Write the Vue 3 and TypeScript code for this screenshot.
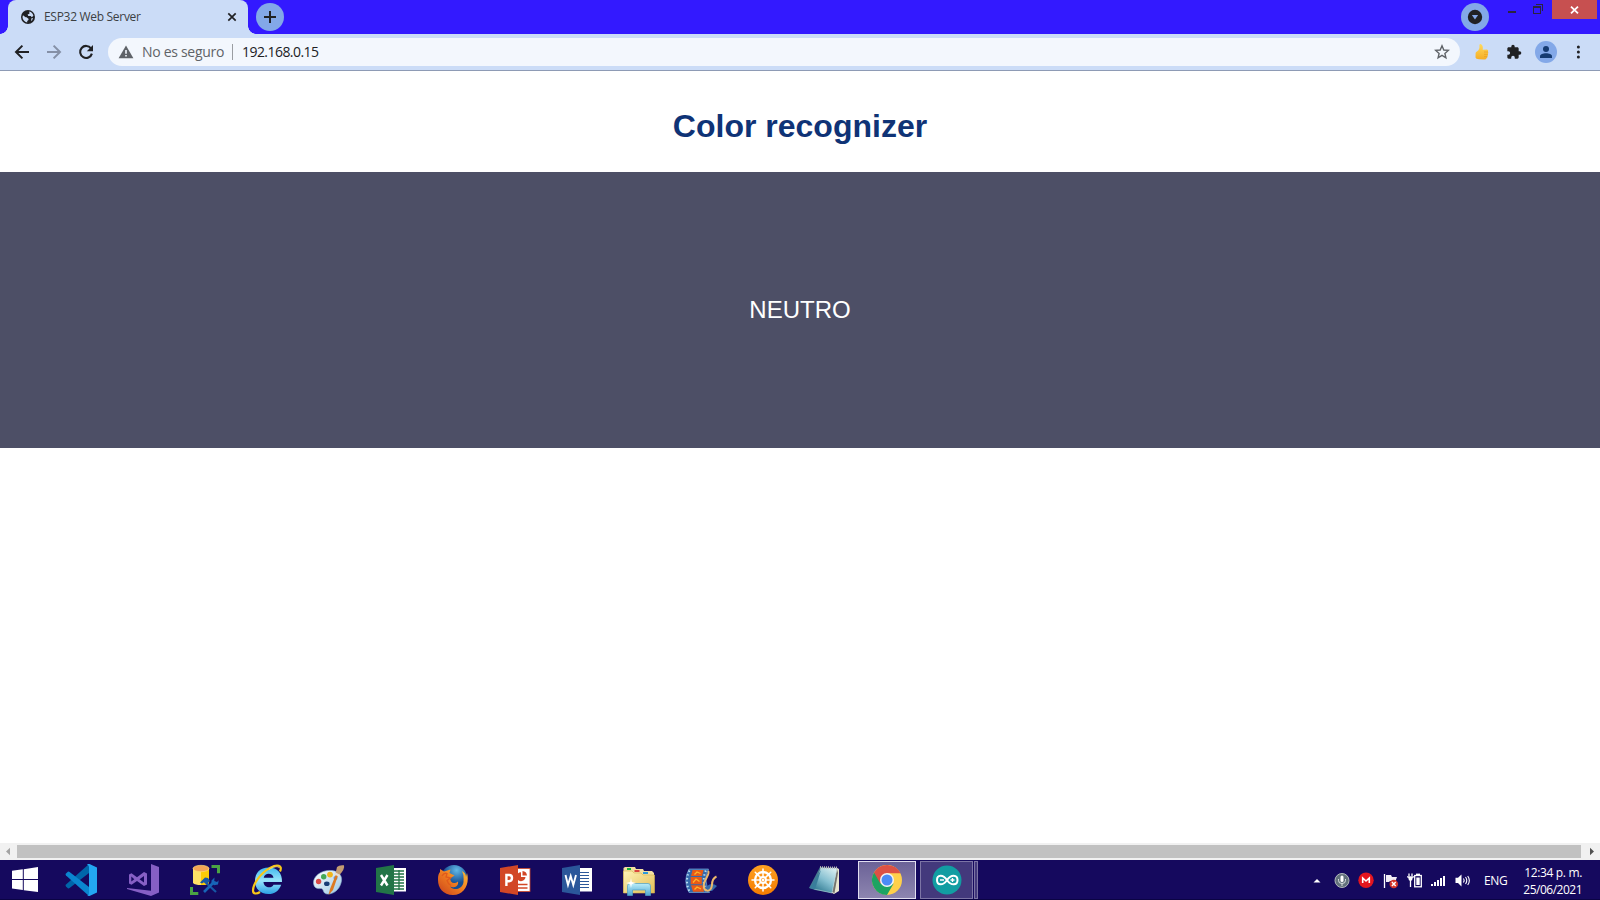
<script setup lang="ts">
import { ref } from 'vue'

const tabTitle = ref('ESP32 Web Server')
const address = ref('192.168.0.15')
const reading = ref('NEUTRO')
const teeth = Array.from({ length: 8 }, (_, i) => i * 45)
const bars = [1, 2, 3, 4, 5]
</script>

<template>
  <div class="screen">
    <header class="titlebar">
      <div class="tab">
        <svg class="globe" width="16" height="16" viewBox="0 0 16 16">
          <circle cx="8" cy="8" r="7" fill="#202124" />
          <path d="M3 6.2 L5.6 8.2 L6.6 8.2 L8.7 10 L8.2 11.2 L7.2 12 V13.4 C4.5 13 2.6 10.8 2.5 8 Z" fill="#cbdcf7" />
          <path d="M9.3 2.6 C11.4 3.1 13 4.7 13.4 6.8 L11.8 8.2 L10.7 7 H8.3 L7.6 5.6 L9.4 4.7 Z" fill="#cbdcf7" />
          <path d="M11.5 9.3 L13 9 L12 11.4 L11 11.8 Z" fill="#cbdcf7" />
        </svg>
        <span class="tab-title">{{ tabTitle }}</span>
        <svg class="tab-close" width="10" height="10" viewBox="0 0 10 10">
          <path d="M1.3 1.3 L8.7 8.7 M8.7 1.3 L1.3 8.7" stroke="#202124" stroke-width="1.7" />
        </svg>
      </div>
      <div class="round new-tab">
        <svg width="14" height="14" viewBox="0 0 14 14"><path d="M7 1 V13 M1 7 H13" stroke="#202124" stroke-width="2" /></svg>
      </div>
      <div class="spacer"></div>
      <div class="round search-tabs">
        <svg width="16" height="16" viewBox="0 0 16 16">
          <circle cx="8" cy="8" r="7.2" fill="#202124" />
          <path d="M4.9 6 H11.1 L8 10.6 Z" fill="#83a8e8" />
        </svg>
      </div>
      <svg class="minimize" width="10" height="14" viewBox="0 0 10 14"><rect x="1" y="11" width="8" height="2" fill="#2b2440" /></svg>
      <svg class="restore" width="11" height="14" viewBox="0 0 11 14" shape-rendering="crispEdges">
        <path d="M3 4.5 H9.5 V11 M.5 7 V13.5 H7.5 V7" fill="none" stroke="#2b2440" />
        <rect x="0" y="6" width="8" height="2" fill="#2b2440" />
      </svg>
      <div class="close">
        <svg width="9" height="8" viewBox="0 0 9 8"><path d="M1 .7 L8 7.3 M8 .7 L1 7.3" stroke="#fff" stroke-width="1.8" /></svg>
      </div>
    </header>

    <nav class="toolbar">
      <svg class="nav-icon" width="16" height="16" viewBox="0 0 16 16"><path d="M15 8 H2 M8.4 1.6 L2 8 L8.4 14.4" fill="none" stroke="#202124" stroke-width="2" /></svg>
      <svg class="nav-icon" width="16" height="16" viewBox="0 0 16 16"><path d="M1 8 H14 M7.6 1.6 L14 8 L7.6 14.4" fill="none" stroke="#8590a6" stroke-width="2" /></svg>
      <svg class="nav-icon" width="16" height="16" viewBox="0 0 16 16">
        <path d="M13 4.4 A6 6 0 1 0 13.9 9.6" fill="none" stroke="#202124" stroke-width="2.1" />
        <path d="M15 1 V7.2 H8.8 Z" fill="#202124" />
      </svg>
      <div class="omnibox">
        <svg class="warning" width="16" height="14" viewBox="0 0 16 14">
          <path d="M8 .6 L15.4 13.2 H.6 Z" fill="#5f6368" />
          <path d="M8 5 V8.8 M8 10 V11.6" stroke="#f3f7fd" stroke-width="1.6" />
        </svg>
        <span class="insecure">No es seguro</span>
        <span class="divider"></span>
        <span class="address">{{ address }}</span>
        <span class="spacer"></span>
        <svg class="star" width="16" height="16" viewBox="0 0 16 16">
          <path d="M8 1.8 L9.8 6 L14.3 6.4 L10.9 9.4 L11.9 13.8 L8 11.4 L4.1 13.8 L5.1 9.4 L1.7 6.4 L6.2 6 Z" fill="none" stroke="#5f6368" stroke-width="1.4" />
        </svg>
      </div>
      <svg class="thumb" width="16" height="18" viewBox="0 0 16 18">
        <defs><linearGradient id="thumbFill" x1="0" y1="0" x2="0" y2="1"><stop offset="0" stop-color="#ffda5c" /><stop offset="1" stop-color="#f5ad25" /></linearGradient></defs>
        <path d="M1.6 10.2 Q1.6 8.800 2.900 8.400 Q6 6.500 5.400 2.400 Q5.600 .7 7 1.200 Q9.400 2.400 8.700 6.800 L13 6.600 Q14.800 7 14 8.600 Q14.800 9.800 13.900 10.900 Q14.500 12.200 13.400 13 Q13.800 14.600 12.700 15 Q12.200 16.600 10.200 16.500 L5 16.300 Q1.700 16 1.500 14.500 Z" fill="url(#thumbFill)" />
        <path d="M10 9 H14 M10 11.4 H13.7 M10 13.6 H13.3" stroke="#e89f20" stroke-width=".7" />
      </svg>
      <svg class="puzzle" width="16" height="16" viewBox="0 0 24 24">
        <path d="M20.5 11H19V7c0-1.1-.9-2-2-2h-4V3.500a2.500 2.500 0 0 0-5 0V5H4c-1.100 0-2 .9-2 2v3.800h1.500a2.700 2.700 0 0 1 0 5.400H2V20c0 1.100.9 2 2 2h3.800v-1.500a2.700 2.700 0 0 1 5.400 0V22H17c1.100 0 2-.9 2-2v-4h1.500a2.500 2.500 0 0 0 0-5z" fill="#202124" />
      </svg>
      <svg class="avatar" width="22" height="22" viewBox="0 0 22 22">
        <circle cx="11" cy="11" r="11" fill="#83a8e8" />
        <circle cx="11" cy="8" r="3" fill="#153a70" />
        <path d="M5 17 V15.4 C5 13.200 8 12.300 11 12.300 S17 13.200 17 15.400 V17 Z" fill="#153a70" />
      </svg>
      <svg class="menu" width="4" height="16" viewBox="0 0 4 16" fill="#202124"><circle cx="2.400" cy="3" r="1.500" /><circle cx="2.400" cy="8" r="1.500" /><circle cx="2.400" cy="13" r="1.500" /></svg>
    </nav>

    <main class="page">
      <h1>Color recognizer</h1>
      <section class="reading">{{ reading }}</section>
    </main>

    <div class="scrollbar">
      <svg width="17" height="17" viewBox="0 0 17 17"><path d="M6 8.500 L10 4.700 V12.300 Z" fill="#a3a3a3" /></svg>
      <div class="scroll-thumb"></div>
      <svg class="scroll-right" width="17" height="17" viewBox="0 0 17 17"><path d="M13 8.500 L9 4.700 V12.300 Z" fill="#505050" /></svg>
    </div>

    <footer class="taskbar">
      <div class="start">
        <svg width="32" height="32" viewBox="0 0 32 32" fill="#fff"><path d="M3 6.800 L13.800 5.300 V15 H3 Z M14.800 5.200 L29 3 V15 H14.800 Z M3 16 H13.800 V26 L3 24.400 Z M14.800 16 H29 V28 L14.800 26.200 Z" /></svg>
      </div>

      <div class="app">
        <svg width="32" height="32" viewBox="0 0 32 32">
          <path d="M24 0 L1 20.500 Q0 21.400 1 22.500 L2.800 24.200 Q3.600 24.700 4.600 24 L24 9 Z" fill="#0065a9" />
          <path d="M24 32 L1 11.500 Q0 10.600 1 9.500 L2.800 7.800 Q3.600 7.300 4.600 8 L24 23 Z" fill="#0a86d0" />
          <path d="M23 0 L24.500 0 L32 3.500 V28.500 L24.500 32 L22 31.500 Q24 31.500 24 29 V3 Q24 1 22 .7 Z" fill="#23a7f2" />
        </svg>
      </div>

      <div class="app">
        <svg width="32" height="32" viewBox="0 0 32 32">
          <path d="M24 0 L32 3 V28.500 L24 32 L0 25 V24 L24 26.700 Z" fill="#865fc5" />
          <path d="M2 10.500 L4.500 9.300 L10 13.300 L17 8 L20 9.500 V20.500 L17 22 L10 17 L4.500 20.800 L2 19.500 Z M4.300 12.500 V17.600 L7.300 15.200 Z M17 12 L12.500 15.200 L17 18.500 Z" fill="#865fc5" fill-rule="evenodd" />
        </svg>
      </div>

      <div class="app">
        <svg width="32" height="32" viewBox="0 0 32 32">
          <path d="M4 4 H20 V19 Q18 21 12 21 T4 19 Z" fill="#ffe066" />
          <path d="M12 6 H20 V19 Q18 21 12 21 Z" fill="#fccb07" />
          <ellipse cx="12" cy="4.500" rx="8" ry="3.200" fill="#f2a456" stroke="#ffe477" stroke-width=".6" />
          <path d="M22.500 1 H31 V9.300 H28 V4 H22.500 Z M1 23 H4 V28 H9.300 V31 H1 Z" fill="#4ba344" />
          <path d="M14 16 L27 28" stroke="#1657a5" stroke-width="2.200" />
          <path d="M11 18.500 L16 13.500 L19 14 L21 17 L18.500 19.500 L16 17.500 L13 19.500 Z" fill="#1657a5" />
          <path d="M15 28 L25 18" stroke="#1764b7" stroke-width="2.600" />
          <path d="M22.500 16.500 L25.500 13.600 L25.300 17 L28 18 L29.700 16.200 L29 20.500 L25 21.300 L22.500 19 Z" fill="#1764b7" />
        </svg>
      </div>

      <div class="app">
        <svg width="32" height="32" viewBox="0 0 32 32">
          <defs><linearGradient id="ieBlue" x1="0" y1="0" x2="0" y2="1"><stop offset="0" stop-color="#41b8ee" /><stop offset=".5" stop-color="#99e5fb" /><stop offset="1" stop-color="#2ca2e5" /></linearGradient></defs>
          <path d="M31 18 H12.500 C12.800 24 20.500 25 22.500 20.700 H30.200 C28 27 23.500 30 17.500 30 C9 30 4 24.500 4 17 C4 8.500 9.500 3.500 17.500 3.500 C26.500 3.500 31.300 9 31 18 Z M12.700 13.800 H22.500 C22 8.500 13.600 8.200 12.700 13.800 Z" fill="url(#ieBlue)" fill-rule="evenodd" />
          <path d="M29 7.500 C32 1 26 0 19.500 3.600 C9.500 9 2 20 2 26.500 C2 30.500 6 30 9 28" fill="none" stroke="#f7c719" stroke-width="2.200" />
          <path d="M28.500 4 C27 1.500 22 3 18 5.500" fill="none" stroke="#ffeb82" stroke-width=".8" />
        </svg>
      </div>

      <div class="app">
        <svg width="32" height="32" viewBox="0 0 32 32">
          <defs><linearGradient id="palette" x1="0" y1="0" x2="1" y2="1"><stop offset="0" stop-color="#fff" /><stop offset="1" stop-color="#9bc8e5" /></linearGradient></defs>
          <path d="M.5 19 C0 12 9 5.500 19 6.500 C27 7.500 30 13 28 19 C26.500 25 21 30.500 14 30 C9.500 29.500 11 24.500 8 24.500 C4 25 1 24 .5 19 Z" fill="url(#palette)" stroke="#8ab4cf" stroke-width=".6" />
          <circle cx="5.600" cy="17.500" r="2.700" fill="#da4b47" /><circle cx="10.700" cy="12.700" r="2.700" fill="#43a957" /><circle cx="17" cy="10.600" r="2.900" fill="#f0b51d" /><circle cx="22.500" cy="14" r="2" fill="#6c92d5" />
          <ellipse cx="13.800" cy="19.700" rx="2.800" ry="2.300" fill="#163c75" />
          <path d="M25.500 10 L23.500 9 L17 25 L15.500 31 L20 26 Z" fill="#dc7a20" />
          <path d="M22.500 9.500 L24 3 Q26 .8 31 1.300 Q32 5 26.500 11 Z" fill="#c39c72" />
          <path d="M22.600 8.600 L27 10.700 L26 12.800 L21.800 10.800 Z" fill="#e9ddd0" />
        </svg>
      </div>

      <div class="app">
        <svg width="32" height="32" viewBox="0 0 32 32">
          <rect x="18" y="4" width="13" height="23.500" fill="#fff" />
          <path d="M19 7 H29 M19 10 H29 M19 13 H29 M19 16 H29 M19 19 H29 M19 22 H29 M19 25 H29 M24 6 V26" stroke="#227447" stroke-width="1.300" />
          <path d="M1 4 L19 1 V31 L1 28 Z" fill="#227447" />
          <path d="M6 11 L12.500 21.500 M12.500 11 L6 21.500" stroke="#fff" stroke-width="2.400" />
        </svg>
      </div>

      <div class="app">
        <svg width="32" height="32" viewBox="0 0 32 32">
          <defs><radialGradient id="foxGlobe" cx=".6" cy=".2"><stop offset="0" stop-color="#62b9e7" /><stop offset="1" stop-color="#164d92" /></radialGradient><linearGradient id="fox" x1="1" y1="0" x2="0" y2="1"><stop offset="0" stop-color="#ffc43a" /><stop offset=".45" stop-color="#f28120" /><stop offset="1" stop-color="#c83f1d" /></linearGradient></defs>
          <circle cx="17" cy="14" r="13" fill="url(#foxGlobe)" />
          <path d="M3 5 L7 7.500 L13.500 5.500 L12.500 9 L17.500 11.500 L13 14.500 L14 17.500 Q17 20.500 21 17.500 C22 23 16 24 13 22.500 C18 28 27 24 26.500 17 Q27 11 25 7 Q29 9 29 13 L30 9 C33 20 27 31 16 31 C6 31 1 24 1 16 Q.8 10 3 8 Z" fill="url(#fox)" />
          <path d="M5 12 Q7 8.500 10 9.500 L9 13 L13.500 14 L10 16.500 Q11 20 14 21.500" fill="none" stroke="#e05a1d" stroke-width="1.300" />
        </svg>
      </div>

      <div class="app">
        <svg width="32" height="32" viewBox="0 0 32 32">
          <rect x="18" y="4.500" width="13" height="23" fill="#fff" stroke="#d24726" stroke-width=".8" />
          <path d="M22 8.200 A4.500 4.500 0 1 0 26.500 13 H22 Z" fill="#d24726" /><path d="M23.500 7 A5 5 0 0 1 28 11.500 H23.500 Z" fill="#d24726" />
          <path d="M19 20.500 H28.500 M19 24 H28.500" stroke="#d24726" stroke-width="1.500" />
          <path d="M1 4 L19 1 V31 L1 28 Z" fill="#d24726" />
          <path d="M7.400 22 V11 H10.200 Q13 11 13 14 T10 17.200 H7.400" fill="none" stroke="#fff" stroke-width="2.400" />
        </svg>
      </div>

      <div class="app">
        <svg width="32" height="32" viewBox="0 0 32 32">
          <rect x="18" y="4" width="13" height="23.500" fill="#fff" />
          <path d="M19 8.500 H28 M19 11.500 H28 M19 14.500 H28 M19 17.500 H28 M19 20.500 H28 M19 23.500 H28" stroke="#2b579a" stroke-width="1" />
          <path d="M1 4 L19 1 V31 L1 28 Z" fill="#2b579a" />
          <path d="M4.500 11 L7 21 L9.700 12 L12.300 21 L15 11" fill="none" stroke="#fff" stroke-width="1.900" />
        </svg>
      </div>

      <div class="app">
        <svg width="32" height="32" viewBox="0 0 32 32">
          <defs><linearGradient id="folder" x1="0" y1="0" x2="1" y2="1"><stop offset="0" stop-color="#fff3b7" /><stop offset="1" stop-color="#e1bd55" /></linearGradient><linearGradient id="stand" x1="0" y1="0" x2="0" y2="1"><stop offset="0" stop-color="#b9edfa" /><stop offset="1" stop-color="#4fa6d0" /></linearGradient></defs>
          <path d="M.5 29 V4 L2 3 H12 L13 5 H20 L21 7 H29 L31 9 V29 Z" fill="#f3dfa0" />
          <rect x="4" y="4" width="4" height="2" fill="#17b13b" /><rect x="11.500" y="6" width="5" height="2" fill="#db443d" /><rect x="20" y="8" width="5" height="2" fill="#2c9bdc" />
          <path d="M.5 7 H9 L11 9 H18 L20 11 H31.500 V29 H.5 Z" fill="url(#folder)" stroke="#d8b64e" stroke-width=".6" />
          <path d="M4.500 31.500 V22 Q4.500 19.500 7 19.500 H25 Q27.500 19.500 27.500 22 V31.500 H22.500 V26 H9.500 V31.500 Z" fill="url(#stand)" stroke="#4b9ec5" stroke-width=".7" />
          <path d="M8 14 L8.800 18 L13 19 L8.800 20.200 L8 24 L7.200 20.200 L3 19 L7.200 18 Z" fill="#fff" />
        </svg>
      </div>

      <div class="app">
        <svg width="32" height="32" viewBox="0 0 32 32">
          <path d="M4 5 H23.500 Q18 16 24.500 28.500 H4 Q-2.500 17 4 5 Z" fill="#356aac" stroke="#75a9d8" stroke-width=".7" />
          <path d="M4.500 6.500 Q-.5 17 4.500 27.500 M20.800 6.500 Q16.500 17 21.300 27.500" fill="none" stroke="#b9def2" stroke-width="2" stroke-dasharray="1.500 2.400" />
          <path d="M7.500 6 H18.500 L17 12 H6 Z M5.700 13 H16.800 V20.300 H5.700 Z M6 21.300 H17.300 L19 27.800 H8 Z" fill="#e95a17" />
          <path d="M9.500 10.500 L12 8 L15.500 9.500 M8 18.500 L11 15 L14.500 17.500 M9.500 25.500 L12 23 L16 25" fill="none" stroke="#ffb52a" stroke-width="1.300" />
          <path d="M22 22 Q27 18 32 22 L27 27 L22 27 Z" fill="#356aac" />
          <path d="M23 7 C26 9 19 16 18.800 21 C18 28 26 29 27 21 Q27 14.500 31.500 12.500" fill="none" stroke="#edb86b" stroke-width="2" />
        </svg>
      </div>

      <div class="app">
        <svg width="32" height="32" viewBox="0 0 32 32">
          <defs><linearGradient id="helm" x1="0" y1="0" x2="0" y2="1"><stop offset="0" stop-color="#ffa122" /><stop offset="1" stop-color="#f57c00" /></linearGradient></defs>
          <circle cx="16" cy="16" r="15" fill="url(#helm)" />
          <g stroke="#fff" fill="none"><circle cx="16" cy="16" r="8" stroke-width="2.300" /><circle cx="16" cy="16" r="3" stroke-width="1.800" /></g>
          <circle cx="16" cy="16" r="1.500" fill="#fff" />
          <g stroke="#fff" stroke-width="1.500" stroke-linecap="round"><line v-for="angle in teeth" :key="angle" x1="16" y1="5" x2="16" y2="13" :transform="`rotate(${angle} 16 16)`" /></g>
        </svg>
      </div>

      <div class="app notepad">
        <svg width="32" height="32" viewBox="0 0 32 32">
          <defs><linearGradient id="pad" x1=".8" y1="0" x2=".2" y2="1"><stop offset="0" stop-color="#d7edf0" /><stop offset=".5" stop-color="#85bfd0" /><stop offset="1" stop-color="#2d778f" /></linearGradient></defs>
          <path d="M12 3 L1 24 L7 26 L24 29 L29 27 V5 Z" fill="#477b91" />
          <path d="M29 4 L31 5 V27 L26 30 L23 28.500 Z" fill="#e9e5cf" />
          <path d="M29 5 L30 9 L26.500 29 L24 28 Z" fill="#73736e" />
          <path d="M13 4 H29 L24 29 L6 25 Z" fill="url(#pad)" stroke="#c4dde2" stroke-width=".5" />
          <path d="M12 3.300 L29.500 3.800" stroke="#b9b9b9" stroke-width="2.400" stroke-dasharray="1 1" />
          <path d="M13 6 L1.500 24 L7 25.500" fill="#397e9b" />
        </svg>
      </div>

      <div class="app active">
        <svg width="32" height="32" viewBox="0 0 32 32">
          <circle cx="16" cy="16" r="15" fill="#ffd04b" />
          <path d="M16 16 L3 8.500 A15 15 0 0 0 16 31 L22.500 19.700 Z" fill="#1da362" />
          <path d="M3 8.500 A15 15 0 0 1 29.500 9.300 H16 L9.500 19.700 Z" fill="#dd5144" />
          <circle cx="16" cy="16" r="7" fill="#f4f4f4" /><circle cx="16" cy="16" r="5.500" fill="#4c8bf5" />
        </svg>
      </div>
      <div class="app opened">
        <svg width="32" height="32" viewBox="0 0 32 32">
          <circle cx="16" cy="16" r="14.500" fill="#129da2" />
          <g fill="none" stroke="#fff" stroke-width="2"><path d="M16 16 C12 10 6 10.500 6 16 S12 22 16 16 C20 10 26.500 10.500 26.500 16 S20 22 16 16 Z" /><path d="M9 16 H13 M19.500 16 H23.500 M21.500 14 V18" stroke-width="1.300" /></g>
        </svg>
      </div>
      <div class="stack"></div>
      <div class="spacer"></div>

      <div class="tray">
        <svg width="8" height="16" viewBox="0 0 8 16"><path d="M.5 10.500 L4 7 L7.500 10.500 Z" fill="#fff" /></svg>
        <svg class="mic" width="16" height="16" viewBox="0 0 16 16">
          <circle cx="8" cy="8.500" r="7" fill="#62717b" stroke="#b2b9bc" /><rect x="6.500" y="3.500" width="3" height="6.500" rx="1.500" fill="#fff" />
          <path d="M4.500 7 V8.500 Q4.500 11.500 8 11.500 T11.500 8.500 V7 M8 11.500 V14" fill="none" stroke="#d9dfe0" />
        </svg>
        <svg class="mega" width="16" height="16" viewBox="0 0 16 16"><circle cx="8" cy="8.300" r="7.700" fill="#e3151f" /><path d="M4.700 11 V6 L8 9 L11.300 6 V11" fill="none" stroke="#fff" stroke-width="1.600" /></svg>
        <svg class="flag" width="16" height="17" viewBox="0 0 16 17">
          <path d="M1.500 2 V16" stroke="#fff" stroke-width="1.300" /><path d="M3 3 H8 L9 5 H14 L12.500 9 H7 L6 10 H3 Z" fill="#f1edf5" />
          <circle cx="10.800" cy="12" r="4.300" fill="#d4342a" /><path d="M8.900 10.100 L12.700 13.900 M12.700 10.100 L8.900 13.900" stroke="#fff" stroke-width="1.400" />
        </svg>
        <svg class="battery" width="16" height="16" viewBox="0 0 16 16">
          <path d="M2 1.500 V4 M5 1.500 V4 M0 4.800 H7 M3.500 8 V15" stroke="#fff" stroke-width="1.300" /><path d="M1 5 H6 L5 8.500 H2 Z" fill="#fff" />
          <rect x="7.700" y="3.500" width="6.600" height="11.300" fill="none" stroke="#fff" stroke-width="1.300" /><path d="M9 2.300 H13" stroke="#fff" stroke-width="1.400" /><rect x="9.300" y="5.500" width="3.400" height="7.500" fill="#fff" />
        </svg>
        <svg class="signal" width="16" height="16" viewBox="0 0 16 16" fill="#fff" shape-rendering="crispEdges">
          <rect v-for="bar in bars" :key="bar" :x="bar * 3 - 3" :y="14 - bar * 2" width="2" :height="bar * 2" />
        </svg>
        <svg class="volume" width="16" height="16" viewBox="0 0 16 16">
          <path d="M.5 5.700 H3 L6.500 2.500 V14.500 L3 11 H.5 Z" fill="#fff" /><path d="M8.300 6.500 Q10 8.500 8.300 10.500 M10.500 5 Q13 8.500 10.500 12 M12.700 4 Q16 8.500 12.700 13" fill="none" stroke="#fff" stroke-width="1.100" />
        </svg>
        <span class="language">ENG</span>
        <div class="clock"><span class="time">12:34 p. m.</span><span class="date">25/06/2021</span></div>
      </div>
    </footer>
  </div>
</template>

<style>
body { margin: 0; overflow: hidden; }
</style>

<style scoped>
.screen { width: 1600px; height: 900px; display: flex; flex-direction: column; background: #fff; font-family: "Open Sans", "Noto Sans", sans-serif; overflow: hidden; }
svg { display: block; flex: none; }
.spacer { flex: 1; }
.titlebar { height: 34px; flex: none; display: flex; background: #3319ff; box-sizing: border-box; padding: 0 3px 0 8px; }
.tab { position: relative; width: 240px; height: 34px; box-sizing: border-box; padding: 0 11px 0 12px; display: flex; align-items: center; background: #cbdcf7; border-radius: 8px 8px 0 0; }
.tab::before, .tab::after { content: ""; position: absolute; bottom: 0; width: 8px; height: 8px; }
.tab::before { left: -8px; background: radial-gradient(circle at 0 0, transparent 7.5px, #cbdcf7 8px); }
.tab::after { right: -8px; background: radial-gradient(circle at 100% 0, transparent 7.5px, #cbdcf7 8px); }
.tab-title { flex: 1; margin-left: 8px; font-size: 12px; line-height: 16px; letter-spacing: -0.3px; color: #3c4043; white-space: nowrap; }
.round { width: 28px; height: 28px; margin-top: 3px; border-radius: 50%; background: #83a8e8; display: flex; align-items: center; justify-content: center; }
.new-tab { margin-left: 8px; }
.search-tabs { margin-right: 18px; }
.restore { margin: 0 8px 0 16px; }
.close { width: 45px; height: 19px; display: flex; align-items: center; justify-content: center; background: #c75050; }
.toolbar { height: 37px; flex: none; box-sizing: border-box; display: flex; align-items: center; padding: 0 20px 0 14px; background: #cbdcf7; border-bottom: 1px solid #8e9bb5; }
.nav-icon { margin-right: 16px; }
.omnibox { width: 1352px; height: 28px; margin-left: -2px; border-radius: 14px; background: #f3f7fd; display: flex; align-items: center; box-sizing: border-box; padding: 0 10px; font-size: 14px; line-height: 20px; }
.insecure, .address { margin-bottom: 1px; white-space: nowrap; }
.insecure { width: 82px; margin-left: 8px; letter-spacing: -0.3px; color: #5f6368; }
.divider { width: 1px; height: 16px; margin: 0 9px 0 8px; background: #9a9da2; }
.address { letter-spacing: -0.55px; color: #202124; }
.thumb { margin-left: 14px; }
.puzzle { margin-left: 16px; }
.avatar { margin-left: 13px; }
.menu { margin-left: 19px; }
.page { flex: 1; text-align: center; font-family: "Liberation Sans", Arial, sans-serif; }
h1 { height: 101px; margin: 0; box-sizing: border-box; padding-top: 37px; color: #0f3376; font-size: 32px; line-height: 37px; font-weight: 700; }
.reading { height: 276px; display: flex; align-items: center; justify-content: center; background: #4d4f66; color: #fff; font-size: 24px; }
.scrollbar { height: 17px; flex: none; display: flex; align-items: center; background: #f1f1f1; }
.scroll-thumb { width: 1564px; height: 13px; background: #c1c1c1; }
.taskbar { height: 40px; flex: none; display: flex; align-items: center; background: #15095e; box-shadow: inset 0 -1px #0b0444; }
.start { width: 49px; margin-right: 1px; display: flex; justify-content: center; }
.app { width: 62px; height: 38px; display: flex; align-items: center; justify-content: center; }
.app.notepad { width: 60px; }
.app.active { width: 58px; margin: 0 4px; box-sizing: border-box; border: 1px solid #e1def0; background: linear-gradient(#6b6297, #8d85b0); }
.app.opened { width: 53px; box-sizing: border-box; border: 1px solid #7c74a5; background: #43397c; }
.stack { width: 4px; height: 38px; box-sizing: border-box; margin-left: 1px; border: 1px solid #7c74a5; background: #43397c; }
.tray { display: flex; align-items: center; color: #fff; font-size: 12px; }
.mic { margin-left: 13px; }
.mega { margin-left: 8px; }
.flag { margin-left: 9px; }
.battery { margin-left: 8px; }
.signal { margin-left: 8px; }
.volume { margin-left: 8px; }
.language { width: 24px; margin: 1px 0 0 13px; letter-spacing: -0.3px; white-space: nowrap; }
.clock { width: 64px; margin: 1px 18px 0 10px; display: flex; flex-direction: column; text-align: right; line-height: 17px; white-space: nowrap; }
.time { letter-spacing: -0.35px; }
.date { letter-spacing: -0.5px; }
</style>
